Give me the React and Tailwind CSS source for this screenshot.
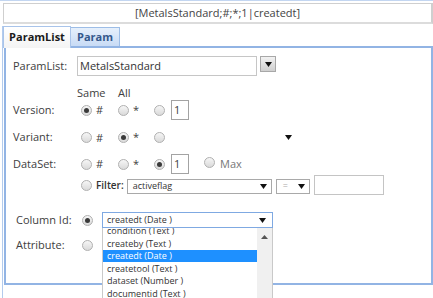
import React from "react";

const font = "font-['Open_Sans',sans-serif]";

function Radio({ checked }) {
  return (
    <span className="inline-flex h-[11px] w-[11px] shrink-0 items-center justify-center rounded-full border border-[#b0b0b0] bg-gradient-to-b from-[#f6f6f6] to-[#dadada]">
      {checked && <span className="h-[5px] w-[5px] rounded-full bg-[#3a3a3a]" />}
    </span>
  );
}

function Arrow({ className = "" }) {
  return (
    <svg width="7" height="5" viewBox="0 0 7 5" className={className}>
      <path d="M0 0h7L3.5 5z" fill="#111" />
    </svg>
  );
}

const columns = [
  "condition (Text )",
  "createby (Text )",
  "createdt (Date )",
  "createtool (Text )",
  "dataset (Number )",
  "documentid (Text )",
  "editdt (Date )",
];

export default function App() {
  return (
    <div className={`${font} h-[298px] w-[433px] overflow-hidden border-t border-[#c3d6f1] bg-white text-[#404040]`}>
      {/* summary bar */}
      <div className="ml-[3px] mt-[2px] flex h-[21px] w-[430px] items-center justify-center border border-r-2 border-b-2 border-[#cfcfcf] border-b-[#dcdcdc] text-[11px] text-[#444]">
        [MetalsStandard;#;*;1|createdt]
      </div>

      {/* tabs + panel */}
      <div className="ml-[2px] mt-[2px] h-[300px] border-l border-[#b3cbed]">
        <div className="flex h-[20px] items-end">
          <div className="relative z-10 -mb-[2px] flex h-[22px] w-[68px] items-center justify-center border border-b-0 border-[#a9c4ea] bg-gradient-to-b from-white to-[#f4f4f4] text-[11px] font-bold text-[#1a1a1a]">
            ParamList
          </div>
          <div className="flex h-[19px] w-[49px] items-center justify-center border border-l-0 border-b-0 border-[#9dbde6] bg-gradient-to-b from-[#e6f0fc] to-[#c8dbf5] text-[11px] font-bold text-[#34588c]">
            Param
          </div>
        </div>

        <div className="ml-[1px] h-[239px] w-[429px] border-2 border-[#92b4e4] bg-white">
          {/* ParamList row */}
          <div className="mt-[8px] flex items-start pl-[7px]">
            <div className="flex h-[20px] w-[64px] items-center text-[11px]">ParamList:</div>
            <div className="flex h-[20px] w-[180px] items-center border border-[#c6c6c6] px-[2px] text-[11px] text-[#333]">
              MetalsStandard
            </div>
            <div className="ml-[3px] flex h-[16px] w-[16px] items-center justify-center border border-[#a8a8a8] bg-gradient-to-b from-[#f2f2f2] to-[#cfcfcf]">
              <Arrow />
            </div>
          </div>

          {/* header */}
          <div className="mt-[11px] flex h-[12px] items-center pl-[71px] text-[11px]">
            <span className="w-[41px]">Same</span>
            <span>All</span>
          </div>

          {/* Version */}
          <div className="mt-[1px] flex h-[20px] items-center pl-[7px] text-[11px]">
            <span className="w-[68px]">Version:</span>
            <span className="flex w-[37px] items-center"><Radio checked /><span className="ml-[4px]">#</span></span>
            <span className="flex w-[36px] items-center"><Radio /><span className="ml-[4px]">*</span></span>
            <Radio />
            <span className="ml-[6px] flex h-[20px] w-[18px] items-center border border-[#a3a3a3] pl-[2px] text-[11px]">1</span>
          </div>

          {/* Variant */}
          <div className="mt-[7px] flex h-[20px] items-center pl-[7px] text-[11px]">
            <span className="w-[68px]">Variant:</span>
            <span className="flex w-[37px] items-center"><Radio /><span className="ml-[4px] mt-[3px]">#</span></span>
            <span className="flex w-[36px] items-center"><Radio checked /><span className="ml-[4px]">*</span></span>
            <Radio />
            <Arrow className="ml-[120px]" />
          </div>

          {/* DataSet */}
          <div className="mt-[7px] flex h-[20px] items-center pl-[7px] text-[11px]">
            <span className="w-[68px]">DataSet:</span>
            <span className="flex w-[37px] items-center"><Radio /><span className="ml-[4px]">#</span></span>
            <span className="flex w-[36px] items-center"><Radio /><span className="ml-[4px]">*</span></span>
            <Radio checked />
            <span className="ml-[6px] flex h-[20px] w-[18px] items-center border border-[#a3a3a3] pl-[2px] text-[11px]">1</span>
            <span className="ml-[15px]"><Radio /></span>
            <span className="ml-[5px] text-[#777]">Max</span>
          </div>

          {/* Filter */}
          <div className="mt-[1px] flex h-[20px] items-center pl-[7px]">
            <span className="w-[68px]" />
            <Radio />
            <span className="ml-[4px] text-[10px] font-semibold text-[#333]">Filter:</span>
            <div className="ml-[3px] mt-[2px] flex h-[15px] w-[145px] items-center justify-between border border-[#a9a9a9] pl-[5px] pr-[4px] text-[9px] text-[#333]">
              <span>activeflag</span>
              <Arrow />
            </div>
            <div className="ml-[4px] mt-[2px] flex h-[15px] w-[34px] items-center justify-between border border-[#a9a9a9] pl-[6px] pr-[4px] text-[9px] text-[#aaa]">
              <span>=</span>
              <Arrow />
            </div>
            <div className="ml-[4px] h-[20px] w-[70px] border border-[#c4c4c4]" />
          </div>

          {/* Column Id */}
          <div className="mt-[15px] flex h-[20px] items-center pl-[10px] text-[11px]">
            <span className="w-[66px]">Column Id:</span>
            <Radio checked />
            <div className="relative ml-[9px] h-[16px] w-[171px]">
              <div className="flex h-[16px] items-center justify-between border border-[#7fa9e2] pl-[4px] pr-[6px] text-[9px] text-[#333]">
                <span>createdt (Date )</span>
                <Arrow />
              </div>
              <div className="absolute left-0 top-full z-20 flex h-[72px] w-[171px] overflow-hidden border-x border-[#c9c9c9] bg-white">
                <div className="flex-1 overflow-hidden">
                  <div className="-mt-[3.5px]">
                    {columns.map((c) => (
                      <div
                        key={c}
                        className={`flex h-[12.5px] items-center pl-[4px] text-[9px] ${
                          c === "createdt (Date )" ? "bg-[#1e90ff] text-white" : "text-[#333]"
                        }`}
                      >
                        {c}
                      </div>
                    ))}
                  </div>
                </div>
                <div className="flex w-[15px] justify-center bg-[#f0f0f0] pt-[7px]">
                  <svg width="7" height="4" viewBox="0 0 7 4">
                    <path d="M3.5 0L7 4H0z" fill="#555" />
                  </svg>
                </div>
              </div>
            </div>
          </div>

          {/* Attribute */}
          <div className="mt-[5px] flex h-[20px] items-center pl-[10px] text-[11px]">
            <span className="w-[66px]">Attribute:</span>
            <Radio />
          </div>
        </div>
      </div>
    </div>
  );
}
